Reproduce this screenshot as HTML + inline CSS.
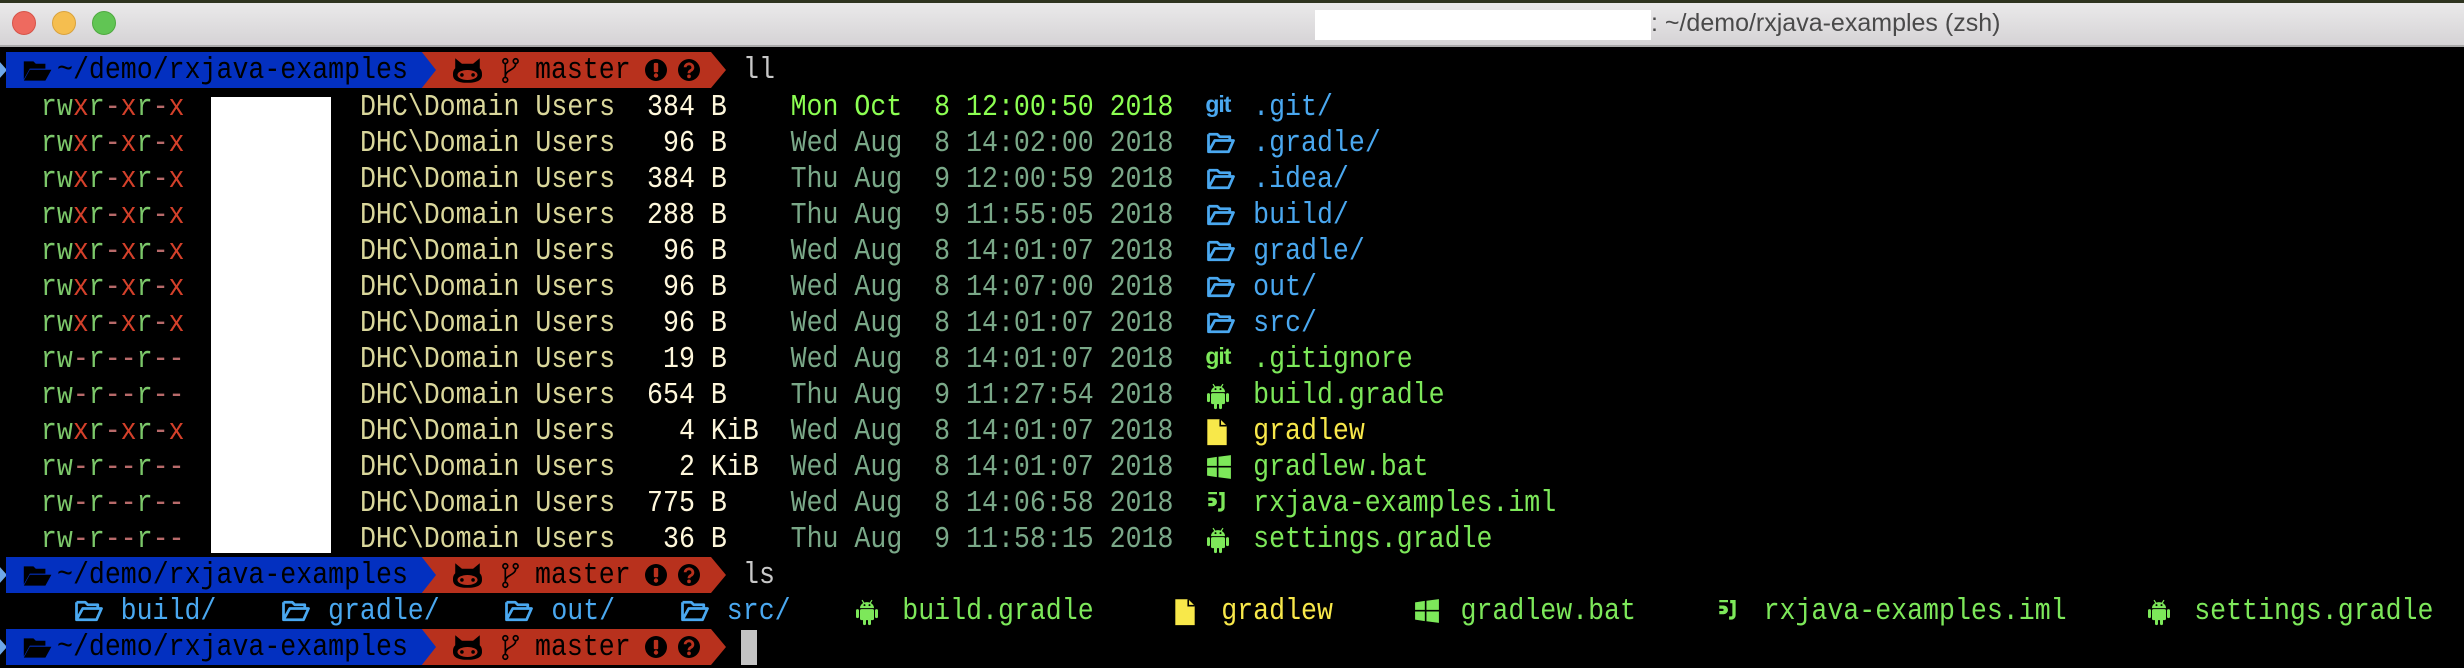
<!DOCTYPE html>
<html><head><meta charset="utf-8"><style>
*{margin:0;padding:0;box-sizing:border-box}
body{width:2464px;height:664px;background:#000;position:relative;overflow:hidden;font-family:"Liberation Mono",monospace;}
#tb{position:absolute;left:0;top:0;width:2464px;height:47px;background:linear-gradient(#ecebec,#d5d3d5);border-bottom:2px solid #a9a9a9}
#tb .strip{position:absolute;left:0;top:0;width:100%;height:3px;background:#2f3420}
.tl{position:absolute;top:11px;width:24px;height:24px;border-radius:50%}
#title{position:absolute;left:1651px;top:9px;font:25px "Liberation Sans",sans-serif;color:#4a4a4a;white-space:pre}
.ln{position:absolute;left:9px;height:36px;line-height:36px;font-size:26.58px;white-space:pre;color:#ccc;transform:scaleY(1.15);transform-origin:0 50%}
.ic{display:inline-block;width:31.9px;height:36px;vertical-align:top;position:relative}
.ic svg{position:absolute;left:1px;top:5px;transform:scaleY(0.87);transform-origin:50% 50%}
.ic.tx{font:bold 23px 'Liberation Sans',sans-serif;line-height:30px;letter-spacing:-1px;transform:scaleY(0.87)}
.g{color:#7cc86a}.x{color:#d4402a}.d{color:#b86a6a}.u{color:#dad79b}.s{color:#fff8dc}
.t{color:#7aa888}.tb{color:#8cff52}.b{color:#4aa8f0}.f{color:#7de85a}.y{color:#f8e84a}
.seg{position:absolute;height:36px}
.pt{position:absolute;height:36px;line-height:36px;font-size:26.58px;white-space:pre;color:#000;transform:scaleY(1.15);transform-origin:0 50%}
.cmd{color:#c8c8c8}
</style></head><body>
<div id="tb"><div class="strip"></div>
<div class="tl" style="left:12px;background:#ee6a5f;border:1px solid #d65348"></div>
<div class="tl" style="left:52px;background:#f5be4f;border:1px solid #d9a23c"></div>
<div class="tl" style="left:92px;background:#61c554;border:1px solid #4ea93f"></div>
<div style="position:absolute;left:1315px;top:10px;width:336px;height:30px;background:#fff"></div>
<div id="title">: ~/demo/rxjava-examples (zsh)</div>
</div>

<svg width="0" height="0" style="position:absolute">
<defs>
<symbol id="fo" viewBox="0 0 24 20"><path d="M2 3h7l2 2h8v3M2 3v14h16l4-9H7l-5 9" fill="none" stroke="currentColor" stroke-width="2.2" stroke-linejoin="round"/></symbol>
<symbol id="fof" viewBox="0 0 24 20"><path d="M1 2h8l2 2h8v4H6L1 17z M6 9h18l-5 9H1z" fill="currentColor"/></symbol>
<symbol id="an" viewBox="0 0 24 28"><path d="M5 10a7 6 0 0 1 14 0z" fill="currentColor"/><path d="M7 2l2 3M17 2l-2 3" stroke="currentColor" stroke-width="1.2"/><circle cx="9.5" cy="7" r="1" fill="#000"/><circle cx="14.5" cy="7" r="1" fill="#000"/><rect x="5" y="11" width="14" height="11" rx="1.5" fill="currentColor"/><rect x="1" y="11" width="3" height="9" rx="1.5" fill="currentColor"/><rect x="20" y="11" width="3" height="9" rx="1.5" fill="currentColor"/><rect x="8" y="20" width="3" height="7" rx="1.5" fill="currentColor"/><rect x="13" y="20" width="3" height="7" rx="1.5" fill="currentColor"/></symbol>
<symbol id="fi" viewBox="0 0 20 26"><path d="M1 1h12l6 6v18H1z" fill="currentColor"/><path d="M13 1v6h6" fill="none" stroke="#000" stroke-width="1.5"/></symbol>
<symbol id="wi" viewBox="0 0 24 24"><path d="M1 4l9-1.3V11H1zM11.5 2.5L23 1v10H11.5zM1 12.5h9v8.8L1 20zM11.5 12.5H23V23l-11.5-1.5z" fill="currentColor"/></symbol>
<symbol id="im" viewBox="0 0 20 22"><path d="M2 2h8v2H2zM12 2h5v14a4 4 0 0 1-4 4h-2v-3h2a1 1 0 0 0 1-1V5h-2z" fill="currentColor"/><path d="M2 7h4a4 4 0 0 1 0 8H2v-3h3a1 1 0 0 0 0-2H2z" fill="currentColor"/></symbol>
<symbol id="cat" viewBox="0 0 26 24"><path d="M2 1l6 5h10l6-5v9c2 2 2 4 2 6c0 5-5 7-13 7S0 21 0 16c0-2 0-4 2-6z" fill="#000"/><ellipse cx="13" cy="16" rx="9" ry="4.5" fill="#b8311d"/><circle cx="8" cy="16" r="1.6" fill="#000"/><circle cx="18" cy="16" r="1.6" fill="#000"/></symbol>
<symbol id="br" viewBox="0 0 16 26"><circle cx="3" cy="4" r="2.3" fill="none" stroke="#000" stroke-width="1.6"/><circle cx="3" cy="22" r="2.3" fill="none" stroke="#000" stroke-width="1.6"/><circle cx="13" cy="4" r="2.3" fill="none" stroke="#000" stroke-width="1.6"/><path d="M3 6.5v13M13 6.5c0 6-10 6-10 12" fill="none" stroke="#000" stroke-width="1.6"/></symbol>
<symbol id="ex" viewBox="0 0 20 20"><circle cx="10" cy="10" r="10" fill="#000"/><rect x="8" y="3.5" width="4" height="8.5" rx="1" fill="#b8311d"/><circle cx="10" cy="15" r="2" fill="#b8311d"/></symbol>
<symbol id="qu" viewBox="0 0 20 20"><circle cx="10" cy="10" r="10" fill="#000"/><path d="M6.5 7.5a3.5 3.2 0 1 1 5 3c-1.3.8-1.5 1.2-1.5 2.5" fill="none" stroke="#b8311d" stroke-width="2.6"/><circle cx="10" cy="15.8" r="1.7" fill="#b8311d"/></symbol>
</defs></svg>

<div style="position:absolute;left:0;top:52px;width:800px;height:36px">
 <div class="seg" style="left:0;width:7px;background:#6fa8e8;clip-path:polygon(0 28%,100% 50%,0 72%)"></div>
 <div class="seg" style="left:420px;width:306px;background:#b8311d;clip-path:polygon(0 0,95.1% 0,100% 50%,95.1% 100%,0 100%)"></div>
 <div class="seg" style="left:6px;width:430px;background:#0330c0;clip-path:polygon(0 0,96.7% 0,100% 50%,96.7% 100%,0 100%)"></div>
 <svg style="position:absolute;left:21px;top:7px" width="32" height="24"><use href="#fof" color="#000"/></svg>
 <div class="pt" style="left:57px">~/demo/rxjava-examples</div>
 <svg style="position:absolute;left:453px;top:5px" width="29" height="27"><use href="#cat"/></svg>
 <svg style="position:absolute;left:502px;top:5px" width="17" height="27"><use href="#br"/></svg>
 <div class="pt" style="left:535px">master</div>
 <svg style="position:absolute;left:645px;top:7px" width="22" height="22"><use href="#ex"/></svg>
 <svg style="position:absolute;left:678px;top:7px" width="22" height="22"><use href="#qu"/></svg>
 <div class="pt cmd" style="left:743px">ll</div>
</div>
<div style="position:absolute;left:0;top:557px;width:800px;height:36px">
 <div class="seg" style="left:0;width:7px;background:#6fa8e8;clip-path:polygon(0 28%,100% 50%,0 72%)"></div>
 <div class="seg" style="left:420px;width:306px;background:#b8311d;clip-path:polygon(0 0,95.1% 0,100% 50%,95.1% 100%,0 100%)"></div>
 <div class="seg" style="left:6px;width:430px;background:#0330c0;clip-path:polygon(0 0,96.7% 0,100% 50%,96.7% 100%,0 100%)"></div>
 <svg style="position:absolute;left:21px;top:7px" width="32" height="24"><use href="#fof" color="#000"/></svg>
 <div class="pt" style="left:57px">~/demo/rxjava-examples</div>
 <svg style="position:absolute;left:453px;top:5px" width="29" height="27"><use href="#cat"/></svg>
 <svg style="position:absolute;left:502px;top:5px" width="17" height="27"><use href="#br"/></svg>
 <div class="pt" style="left:535px">master</div>
 <svg style="position:absolute;left:645px;top:7px" width="22" height="22"><use href="#ex"/></svg>
 <svg style="position:absolute;left:678px;top:7px" width="22" height="22"><use href="#qu"/></svg>
 <div class="pt cmd" style="left:743px">ls</div>
</div>
<div style="position:absolute;left:0;top:629px;width:800px;height:36px">
 <div class="seg" style="left:0;width:7px;background:#6fa8e8;clip-path:polygon(0 28%,100% 50%,0 72%)"></div>
 <div class="seg" style="left:420px;width:306px;background:#b8311d;clip-path:polygon(0 0,95.1% 0,100% 50%,95.1% 100%,0 100%)"></div>
 <div class="seg" style="left:6px;width:430px;background:#0330c0;clip-path:polygon(0 0,96.7% 0,100% 50%,96.7% 100%,0 100%)"></div>
 <svg style="position:absolute;left:21px;top:7px" width="32" height="24"><use href="#fof" color="#000"/></svg>
 <div class="pt" style="left:57px">~/demo/rxjava-examples</div>
 <svg style="position:absolute;left:453px;top:5px" width="29" height="27"><use href="#cat"/></svg>
 <svg style="position:absolute;left:502px;top:5px" width="17" height="27"><use href="#br"/></svg>
 <div class="pt" style="left:535px">master</div>
 <svg style="position:absolute;left:645px;top:7px" width="22" height="22"><use href="#ex"/></svg>
 <svg style="position:absolute;left:678px;top:7px" width="22" height="22"><use href="#qu"/></svg>
 <div style="position:absolute;left:741px;top:1px;width:16px;height:35px;background:#c4c4c4"></div>
</div>

<div class="ln" style="top:89px">  <span class="g">rw</span><span class="x">x</span><span class="g">r</span><span class="d">-</span><span class="x">x</span><span class="g">r</span><span class="d">-</span><span class="x">x</span>           <span class="u">DHC\Domain Users</span>  <span class="s">384 B</span>    <span class="tb">Mon Oct  8 12:00:50 2018</span>  <span class="ic tx b">git</span> <span class="b">.git/</span></div>
<div class="ln" style="top:125px">  <span class="g">rw</span><span class="x">x</span><span class="g">r</span><span class="d">-</span><span class="x">x</span><span class="g">r</span><span class="d">-</span><span class="x">x</span>           <span class="u">DHC\Domain Users</span>   <span class="s">96 B</span>    <span class="t">Wed Aug  8 14:02:00 2018</span>  <span class="ic b"><svg width="30" height="26"><use href="#fo"/></svg></span> <span class="b">.gradle/</span></div>
<div class="ln" style="top:161px">  <span class="g">rw</span><span class="x">x</span><span class="g">r</span><span class="d">-</span><span class="x">x</span><span class="g">r</span><span class="d">-</span><span class="x">x</span>           <span class="u">DHC\Domain Users</span>  <span class="s">384 B</span>    <span class="t">Thu Aug  9 12:00:59 2018</span>  <span class="ic b"><svg width="30" height="26"><use href="#fo"/></svg></span> <span class="b">.idea/</span></div>
<div class="ln" style="top:197px">  <span class="g">rw</span><span class="x">x</span><span class="g">r</span><span class="d">-</span><span class="x">x</span><span class="g">r</span><span class="d">-</span><span class="x">x</span>           <span class="u">DHC\Domain Users</span>  <span class="s">288 B</span>    <span class="t">Thu Aug  9 11:55:05 2018</span>  <span class="ic b"><svg width="30" height="26"><use href="#fo"/></svg></span> <span class="b">build/</span></div>
<div class="ln" style="top:233px">  <span class="g">rw</span><span class="x">x</span><span class="g">r</span><span class="d">-</span><span class="x">x</span><span class="g">r</span><span class="d">-</span><span class="x">x</span>           <span class="u">DHC\Domain Users</span>   <span class="s">96 B</span>    <span class="t">Wed Aug  8 14:01:07 2018</span>  <span class="ic b"><svg width="30" height="26"><use href="#fo"/></svg></span> <span class="b">gradle/</span></div>
<div class="ln" style="top:269px">  <span class="g">rw</span><span class="x">x</span><span class="g">r</span><span class="d">-</span><span class="x">x</span><span class="g">r</span><span class="d">-</span><span class="x">x</span>           <span class="u">DHC\Domain Users</span>   <span class="s">96 B</span>    <span class="t">Wed Aug  8 14:07:00 2018</span>  <span class="ic b"><svg width="30" height="26"><use href="#fo"/></svg></span> <span class="b">out/</span></div>
<div class="ln" style="top:305px">  <span class="g">rw</span><span class="x">x</span><span class="g">r</span><span class="d">-</span><span class="x">x</span><span class="g">r</span><span class="d">-</span><span class="x">x</span>           <span class="u">DHC\Domain Users</span>   <span class="s">96 B</span>    <span class="t">Wed Aug  8 14:01:07 2018</span>  <span class="ic b"><svg width="30" height="26"><use href="#fo"/></svg></span> <span class="b">src/</span></div>
<div class="ln" style="top:341px">  <span class="g">rw</span><span class="d">-</span><span class="g">r</span><span class="d">--</span><span class="g">r</span><span class="d">--</span>           <span class="u">DHC\Domain Users</span>   <span class="s">19 B</span>    <span class="t">Wed Aug  8 14:01:07 2018</span>  <span class="ic tx f">git</span> <span class="f">.gitignore</span></div>
<div class="ln" style="top:377px">  <span class="g">rw</span><span class="d">-</span><span class="g">r</span><span class="d">--</span><span class="g">r</span><span class="d">--</span>           <span class="u">DHC\Domain Users</span>  <span class="s">654 B</span>    <span class="t">Thu Aug  9 11:27:54 2018</span>  <span class="ic f"><svg width="24" height="28"><use href="#an"/></svg></span> <span class="f">build.gradle</span></div>
<div class="ln" style="top:413px">  <span class="g">rw</span><span class="x">x</span><span class="g">r</span><span class="d">-</span><span class="x">x</span><span class="g">r</span><span class="d">-</span><span class="x">x</span>           <span class="u">DHC\Domain Users</span>    <span class="s">4 KiB</span>  <span class="t">Wed Aug  8 14:01:07 2018</span>  <span class="ic y"><svg width="22" height="28"><use href="#fi"/></svg></span> <span class="y">gradlew</span></div>
<div class="ln" style="top:449px">  <span class="g">rw</span><span class="d">-</span><span class="g">r</span><span class="d">--</span><span class="g">r</span><span class="d">--</span>           <span class="u">DHC\Domain Users</span>    <span class="s">2 KiB</span>  <span class="t">Wed Aug  8 14:01:07 2018</span>  <span class="ic f"><svg width="26" height="26"><use href="#wi"/></svg></span> <span class="f">gradlew.bat</span></div>
<div class="ln" style="top:485px">  <span class="g">rw</span><span class="d">-</span><span class="g">r</span><span class="d">--</span><span class="g">r</span><span class="d">--</span>           <span class="u">DHC\Domain Users</span>  <span class="s">775 B</span>    <span class="t">Wed Aug  8 14:06:58 2018</span>  <span class="ic f"><svg width="22" height="24"><use href="#im"/></svg></span> <span class="f">rxjava-examples.iml</span></div>
<div class="ln" style="top:521px">  <span class="g">rw</span><span class="d">-</span><span class="g">r</span><span class="d">--</span><span class="g">r</span><span class="d">--</span>           <span class="u">DHC\Domain Users</span>   <span class="s">36 B</span>    <span class="t">Thu Aug  9 11:58:15 2018</span>  <span class="ic f"><svg width="24" height="28"><use href="#an"/></svg></span> <span class="f">settings.gradle</span></div>

<div style="position:absolute;left:211px;top:97px;width:120px;height:456px;background:#fff"></div>

<div class="ln" style="top:593px">    <span class="ic b"><svg width="30" height="26"><use href="#fo"/></svg></span> <span class="b">build/</span>    <span class="ic b"><svg width="30" height="26"><use href="#fo"/></svg></span> <span class="b">gradle/</span>    <span class="ic b"><svg width="30" height="26"><use href="#fo"/></svg></span> <span class="b">out/</span>    <span class="ic b"><svg width="30" height="26"><use href="#fo"/></svg></span> <span class="b">src/</span>    <span class="ic f"><svg width="24" height="28"><use href="#an"/></svg></span> <span class="f">build.gradle</span>     <span class="ic y"><svg width="22" height="28"><use href="#fi"/></svg></span> <span class="y">gradlew</span>     <span class="ic f"><svg width="26" height="26"><use href="#wi"/></svg></span> <span class="f">gradlew.bat</span>     <span class="ic f"><svg width="22" height="24"><use href="#im"/></svg></span> <span class="f">rxjava-examples.iml</span>     <span class="ic f"><svg width="24" height="28"><use href="#an"/></svg></span> <span class="f">settings.gradle</span></div>
</body></html>
